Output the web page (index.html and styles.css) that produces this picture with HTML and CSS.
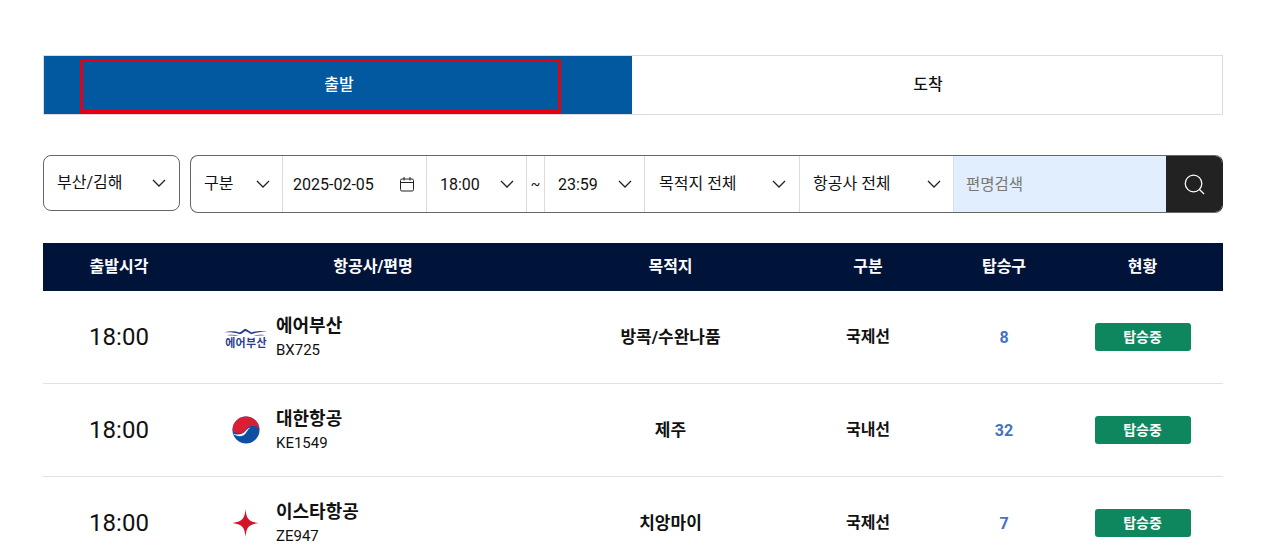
FILE: index.html
```html
<!DOCTYPE html>
<html lang="ko">
<head>
<meta charset="utf-8">
<title>출발 도착 현황</title>
<link rel="stylesheet" href="styles.css">
</head>
<body>
<main class="page">
  <div class="tabs">
    <button class="tab tab-active">출발<span class="focus-box"></span></button>
    <button class="tab">도착</button>
  </div>

  <div class="filters">
    <div class="airport">
      <span class="ko">부산/김해</span>
      <svg class="chev" viewBox="0 0 14 8"><path d="M1 1l6 6 6-6"/></svg>
    </div>
    <div class="bar">
      <div class="seg seg-kind"><span class="ko">구분</span><svg class="chev" viewBox="0 0 14 8"><path d="M1 1l6 6 6-6"/></svg></div>
      <div class="seg seg-date"><span class="num">2025-02-05</span>
        <svg class="cal" viewBox="0 0 16 16"><rect x="1.500" y="3" width="13" height="12" rx="1.500"/><path d="M1.500 6.500h13M5 1v3.500M11 1v3.500"/></svg>
      </div>
      <div class="seg seg-time"><span class="num">18:00</span><svg class="chev" viewBox="0 0 14 8"><path d="M1 1l6 6 6-6"/></svg></div>
      <div class="seg seg-tilde">~</div>
      <div class="seg seg-time"><span class="num">23:59</span><svg class="chev" viewBox="0 0 14 8"><path d="M1 1l6 6 6-6"/></svg></div>
      <div class="seg seg-dest"><span class="ko">목적지 전체</span><svg class="chev" viewBox="0 0 14 8"><path d="M1 1l6 6 6-6"/></svg></div>
      <div class="seg seg-air"><span class="ko">항공사 전체</span><svg class="chev" viewBox="0 0 14 8"><path d="M1 1l6 6 6-6"/></svg></div>
      <div class="seg-search">편명검색</div>
      <div class="search-btn">
        <svg viewBox="0 0 22 22"><circle cx="10" cy="10" r="8.700"/><path d="M16.200 16.200l4.800 4.800"/></svg>
      </div>
    </div>
  </div>

  <div class="board">
    <div class="row head">
      <div>출발시각</div><div>항공사/편명</div><div>목적지</div><div>구분</div><div>탑승구</div><div>현황</div>
    </div>

    <div class="row">
      <div class="time">18:00</div>
      <div class="airline">
        <svg class="logo" viewBox="0 0 44 30">
          <path class="wing" d="M0 10.500c5-1.800 11-1.800 15.500 0 2-.6 3.500-2.600 5.500-3.700 2 .3 4 2.300 6.500 3.700 5-1.800 11-2.200 16.500-.6-5.500-.6-11 .3-16.500 2.300-2.300-1-4-2.500-6-3.200-1.800 1-3.200 2.800-5.800 3.300-5-1.900-10.500-2.300-15.700-1.800z"/>
          <path class="wing" d="M3 13.300c4-.8 8-.6 12 .6-4-.3-8-.5-12-.6zM29 13.900c4-1.200 8-1.400 12-.6-4 .1-8 .3-12 .6z"/>
          <text class="logo-text" x="22" y="25" text-anchor="middle">에어부산</text>
        </svg>
        <div class="names"><strong>에어부산</strong><span>BX725</span></div>
      </div>
      <div class="dest">방콕/수완나품</div>
      <div class="kind">국제선</div>
      <div class="gate">8</div>
      <div><span class="status">탑승중</span></div>
    </div>

    <div class="row">
      <div class="time">18:00</div>
      <div class="airline">
        <svg class="logo" viewBox="0 0 44 30">
          <circle cx="22" cy="15" r="13.500" fill="#0f4f9f"/>
          <path d="M8.500 15A13.500 13.500 0 0 1 35.500 15C33.500 10.500 28 9.500 24.500 12 22 13.800 20.500 17.500 17.500 18 14 18.500 10 18 8.500 15z" fill="#dc1e35"/>
          <path d="M9 18.500C12 21.500 17 22 20 20 22.500 18.300 23.500 14.500 26.500 12.500 23.500 13 22 15.500 20 17.500 17 19.800 12.500 20 9 18.500z" fill="#f2f4f8"/>
        </svg>
        <div class="names"><strong>대한항공</strong><span>KE1549</span></div>
      </div>
      <div class="dest">제주</div>
      <div class="kind">국내선</div>
      <div class="gate">32</div>
      <div><span class="status">탑승중</span></div>
    </div>

    <div class="row">
      <div class="time">18:00</div>
      <div class="airline">
        <svg class="logo" viewBox="0 0 44 30">
          <path d="M21.500 1C22.400 10 23.800 13.600 34.500 15 23.800 16.400 22.400 20 21.500 29 20.600 20 19.200 16.400 8.500 15 19.200 13.600 20.600 10 21.500 1z" fill="#d2142a"/>
        </svg>
        <div class="names"><strong>이스타항공</strong><span>ZE947</span></div>
      </div>
      <div class="dest">치앙마이</div>
      <div class="kind">국제선</div>
      <div class="gate">7</div>
      <div><span class="status">탑승중</span></div>
    </div>
  </div>
</main>
</body>
</html>
```

FILE: styles.css
```css
* { box-sizing: border-box; }

html, body {
  margin: 0;
  height: 554px;
  overflow: hidden;
  background: #fff;
}

body {
  font-family: Roboto, "Noto Sans CJK KR", sans-serif;
  color: #111;
  font-size: 16px;
}

.page {
  width: 1180px;
  margin-left: 43px;
  padding-top: 55px;
}

/* tabs */
.tabs {
  display: flex;
  height: 60px;
}

.tab {
  position: relative;
  flex: 0 0 591px;
  padding: 0 0 4px 2px;
  font: 500 16px Roboto, "Noto Sans CJK KR", sans-serif;
  color: #111;
  background: #fff;
  border: 1px solid #dcdcdc;
  border-left: 0;
}

.tab-active {
  flex-basis: 589px;
  color: #fff;
  background: #02599f;
  border: 1px solid #dcdcdc;
  border-right: 0;
}

.focus-box {
  position: absolute;
  left: 36px;
  top: 3px;
  width: 481px;
  height: 54px;
  border: 3px solid #e60012;
}

/* filters */
.filters {
  display: flex;
  align-items: flex-start;
  gap: 10px;
  margin-top: 40px;
}

.airport {
  display: flex;
  align-items: center;
  justify-content: space-between;
  width: 137px;
  height: 56px;
  padding: 0 13px;
  border: 1px solid #666;
  border-radius: 8px;
}

.ko { padding-bottom: 4px; }

.bar {
  display: flex;
  width: 1033px;
  height: 58px;
  border: 1px solid #666;
  border-right-color: #222;
  border-radius: 8px;
  overflow: hidden;
}

.seg {
  display: flex;
  align-items: center;
  justify-content: space-between;
  padding: 0 12px 0 13px;
  border-right: 1px solid #dcdcdc;
}

.seg-kind { width: 92px; }
.seg-date { width: 144px; padding: 0 11px 0 10px; }
.seg-time { width: 100px; }
.seg-tilde { width: 18px; padding: 0; justify-content: center; font-size: 14px; }
.seg-dest { width: 155px; padding-left: 14px; padding-right: 13px; }
.seg-air { width: 154px; }

.seg-search {
  display: flex;
  align-items: center;
  flex: 1;
  padding: 0 0 2px 12px;
  color: #777;
  font-size: 15.500px;
  background: #e1eefd;
}

.search-btn {
  display: flex;
  align-items: center;
  justify-content: center;
  width: 56px;
  background: #222;
}

.search-btn svg {
  width: 21px;
  height: 21px;
  fill: none;
  stroke: #fff;
  stroke-width: 1.300;
}

.chev {
  flex: none;
  width: 14px;
  height: 8px;
  fill: none;
  stroke: #222;
  stroke-width: 1.300;
}

.cal {
  flex: none;
  width: 16px;
  height: 16px;
  fill: none;
  stroke: #222;
  stroke-width: 1;
}

/* board */
.board { margin-top: 30px; }

.row {
  display: grid;
  grid-template-columns: 152px 356px 239px 156px 116px 161px;
  align-items: center;
  height: 93px;
  text-align: center;
  border-bottom: 1px solid #e2e2e2;
}

.head {
  height: 48px;
  padding-bottom: 4px;
  color: #fff;
  font-weight: 700;
  background: #001439;
  border-bottom: 0;
}

.time { font-size: 24px; }

.airline {
  display: flex;
  align-items: center;
  gap: 8px;
  padding-left: 29px;
  text-align: left;
}

.logo {
  flex: none;
  width: 44px;
  height: 30px;
}

.wing { fill: #2b3f8f; }

.logo-text {
  font-size: 11px;
  font-weight: 700;
  letter-spacing: .3px;
  fill: #2b3f8f;
}

.names {
  display: flex;
  flex-direction: column;
  gap: 2px;
}

.names strong {
  font-size: 18px;
  font-weight: 700;
  line-height: 24px;
}

.names span {
  font-size: 15px;
  line-height: 20px;
}

.dest {
  padding-bottom: 4px;
  font-size: 17px;
  font-weight: 700;
}

.kind {
  padding-bottom: 4px;
  font-weight: 700;
}

.gate {
  color: #4472c4;
  font-weight: 700;
}

.status {
  display: inline-block;
  width: 96px;
  height: 28px;
  color: #fff;
  font-size: 14px;
  font-weight: 700;
  line-height: 28px;
  background: #0e875f;
  border-radius: 3px;
}
```
